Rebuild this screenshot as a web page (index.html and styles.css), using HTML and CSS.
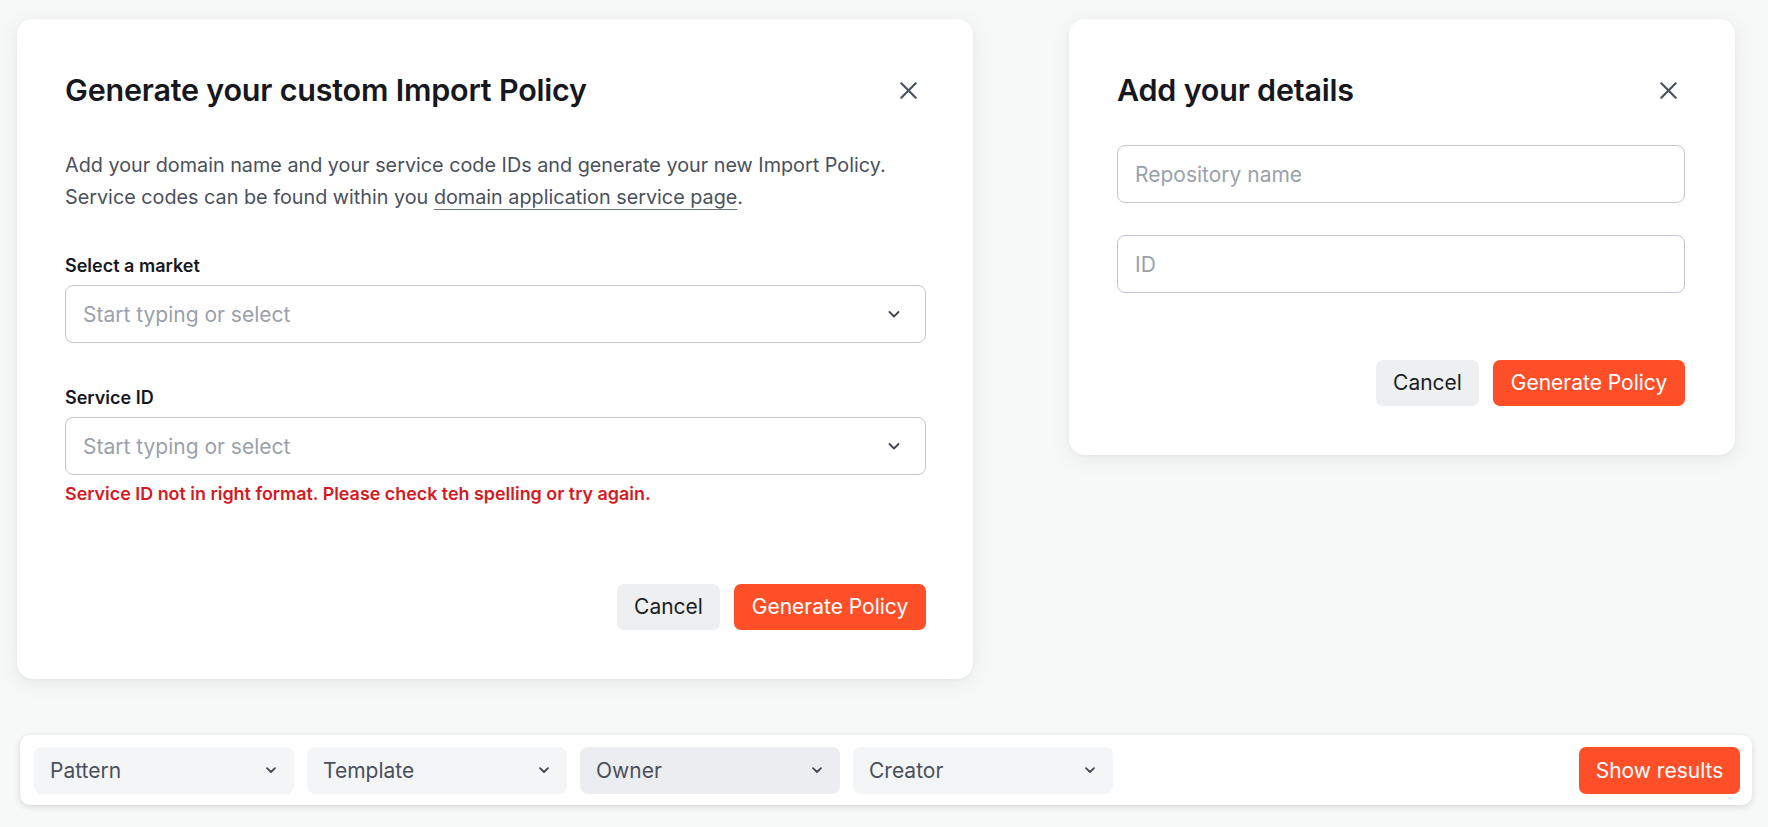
FILE: index.html
```html
<!DOCTYPE html>
<html lang="en">
<head>
<meta charset="utf-8">
<title>Import Policy</title>
<link rel="stylesheet" href="styles.css">
</head>
<body>
<main class="page">
  <div class="top">
    <section class="card card-left">
      <header class="card-head">
        <h1 class="card-title">Generate your custom Import Policy</h1>
        <button class="close-btn" aria-label="Close">
          <svg viewBox="0 0 17 17" width="17" height="17"><path d="M1.3 1.3 15.7 15.7M15.7 1.3 1.3 15.7" fill="none" stroke="#4b5360" stroke-width="2.2" stroke-linecap="round"/></svg>
        </button>
      </header>
      <p class="intro">Add your domain name and your service code IDs and generate your new Import Policy.<br>Service codes can be found within you <a href="#" class="link">domain application service page</a>.</p>
      <div class="field field-first">
        <label class="label">Select a market</label>
        <div class="select">
          <span class="placeholder">Start typing or select</span>
          <svg class="chev" viewBox="0 0 14 14" width="14" height="14"><path d="M2.5 5 7 9.5 11.5 5" fill="none" stroke="#3f4651" stroke-width="1.8" stroke-linecap="round" stroke-linejoin="round"/></svg>
        </div>
      </div>
      <div class="field field-second">
        <label class="label">Service ID</label>
        <div class="select">
          <span class="placeholder">Start typing or select</span>
          <svg class="chev" viewBox="0 0 14 14" width="14" height="14"><path d="M2.5 5 7 9.5 11.5 5" fill="none" stroke="#3f4651" stroke-width="1.8" stroke-linecap="round" stroke-linejoin="round"/></svg>
        </div>
        <p class="error">Service ID not in right format. Please check teh spelling or try again.</p>
      </div>
      <div class="actions actions-left">
        <button class="btn btn-cancel">Cancel</button>
        <button class="btn btn-primary">Generate Policy</button>
      </div>
    </section>

    <section class="card card-right">
      <header class="card-head">
        <h2 class="card-title">Add your details</h2>
        <button class="close-btn" aria-label="Close">
          <svg viewBox="0 0 17 17" width="17" height="17"><path d="M1.3 1.3 15.7 15.7M15.7 1.3 1.3 15.7" fill="none" stroke="#4b5360" stroke-width="2.2" stroke-linecap="round"/></svg>
        </button>
      </header>
      <div class="input input-first"><span class="placeholder">Repository name</span></div>
      <div class="input input-second"><span class="placeholder">ID</span></div>
      <div class="actions actions-right">
        <button class="btn btn-cancel">Cancel</button>
        <button class="btn btn-primary">Generate Policy</button>
      </div>
    </section>
  </div>

  <nav class="filter-bar">
    <div class="filter"><span>Pattern</span><svg class="chev-sm" viewBox="0 0 14 14" width="14" height="14"><path d="M3 5.2 7 9 11 5.2" fill="none" stroke="#3f4651" stroke-width="1.8" stroke-linecap="round" stroke-linejoin="round"/></svg></div>
    <div class="filter"><span>Template</span><svg class="chev-sm" viewBox="0 0 14 14" width="14" height="14"><path d="M3 5.2 7 9 11 5.2" fill="none" stroke="#3f4651" stroke-width="1.8" stroke-linecap="round" stroke-linejoin="round"/></svg></div>
    <div class="filter filter-hover"><span>Owner</span><svg class="chev-sm" viewBox="0 0 14 14" width="14" height="14"><path d="M3 5.2 7 9 11 5.2" fill="none" stroke="#3f4651" stroke-width="1.8" stroke-linecap="round" stroke-linejoin="round"/></svg></div>
    <div class="filter"><span>Creator</span><svg class="chev-sm" viewBox="0 0 14 14" width="14" height="14"><path d="M3 5.2 7 9 11 5.2" fill="none" stroke="#3f4651" stroke-width="1.8" stroke-linecap="round" stroke-linejoin="round"/></svg></div>
    <button class="btn btn-primary btn-show">Show results</button>
  </nav>
</main>
</body>
</html>
```

FILE: styles.css
```css
* { box-sizing: border-box; }

html, body {
  margin: 0;
  padding: 0;
  background: #f7f8f8;
  font-family: Inter, "Noto Sans", "Liberation Sans", sans-serif;
  color: #16181d;
}

.page {
  padding: 19px 0 0 17px;
  width: 1768px;
  height: 827px;
}

.top {
  display: flex;
  align-items: flex-start;
  gap: 96px;
}

.card {
  background: #ffffff;
  border-radius: 16px;
  box-shadow: 0 4px 22px rgba(20, 24, 30, 0.07), 0 1px 3px rgba(20, 24, 30, 0.04);
  padding: 53px 47px 49px 48px;
}

.card-left { width: 956px; }
.card-right { width: 666px; padding-right: 50px; padding-bottom: 49px; }

.card-head {
  display: flex;
  align-items: center;
  justify-content: space-between;
  height: 36px;
}

.card-left .card-head { margin-right: 1px; }

.card-title {
  margin: 0;
  font-size: 30.5px;
  line-height: 36px;
  font-weight: 600;
  letter-spacing: -0.2px;
  color: #16181d;
}

.close-btn {
  width: 34px;
  height: 34px;
  border: 0;
  padding: 0;
  background: transparent;
  display: flex;
  align-items: center;
  justify-content: center;
}

.close-btn svg { display: block; }

.intro {
  margin: 42px 0 0;
  font-size: 19.8px;
  line-height: 31.5px;
  color: #4a505b;
}

.link {
  color: #4a505b;
  text-decoration: underline;
  text-decoration-color: #6b7280;
  text-underline-offset: 5px;
  text-decoration-thickness: 1px;
}

.field-first { margin-top: 41px; }
.field-second { margin-top: 43px; }

.label {
  display: block;
  font-size: 18px;
  line-height: 24px;
  font-weight: 600;
  color: #16181d;
  margin-bottom: 7px;
}

.select, .input {
  height: 58px;
  border: 1.5px solid #c3c6cf;
  border-radius: 8px;
  background: #fff;
  display: flex;
  align-items: center;
  justify-content: space-between;
  padding: 0 24px 0 17px;
}

.placeholder {
  font-size: 21px;
  color: #9ba1ab;
}

.chev { display: block; }

.error {
  margin: 7px 0 0;
  font-size: 17.9px;
  line-height: 24px;
  font-weight: 600;
  color: #d41a24;
}

.actions {
  display: flex;
  justify-content: flex-end;
  gap: 14px;
}

.actions-left { margin-top: 78px; }
.actions-right { margin-top: 67px; }

.input-first { margin-top: 37px; }
.input-second { margin-top: 32px; }

.btn {
  height: 46px;
  border: 0;
  border-radius: 7px;
  padding: 0;
  font-family: inherit;
  font-size: 21px;
  line-height: 46px;
}

.btn-cancel {
  width: 103px;
  background: #eeeff1;
  color: #1c1f24;
}

.btn-primary {
  width: 192px;
  background: #ff4f28;
  color: #ffffff;
}

.filter-bar {
  margin: 56px 16px 0 3px;
  height: 70px;
  background: #ffffff;
  border-radius: 10px;
  box-shadow: 0 2px 6px rgba(20, 24, 30, 0.14);
  display: flex;
  align-items: center;
  gap: 13px;
  padding: 0 12px 0 14px;
}

.filter {
  width: 260px;
  height: 47px;
  border-radius: 8px;
  background: #f4f5f7;
  display: flex;
  align-items: center;
  justify-content: space-between;
  padding: 0 16px 0 16px;
  font-size: 21px;
  color: #4a505b;
}

.filter-hover { background: #ecedf0; }

.chev-sm { display: block; }

.btn-show {
  margin-left: auto;
  width: 161px;
  height: 47px;
  line-height: 47px;
}
```
